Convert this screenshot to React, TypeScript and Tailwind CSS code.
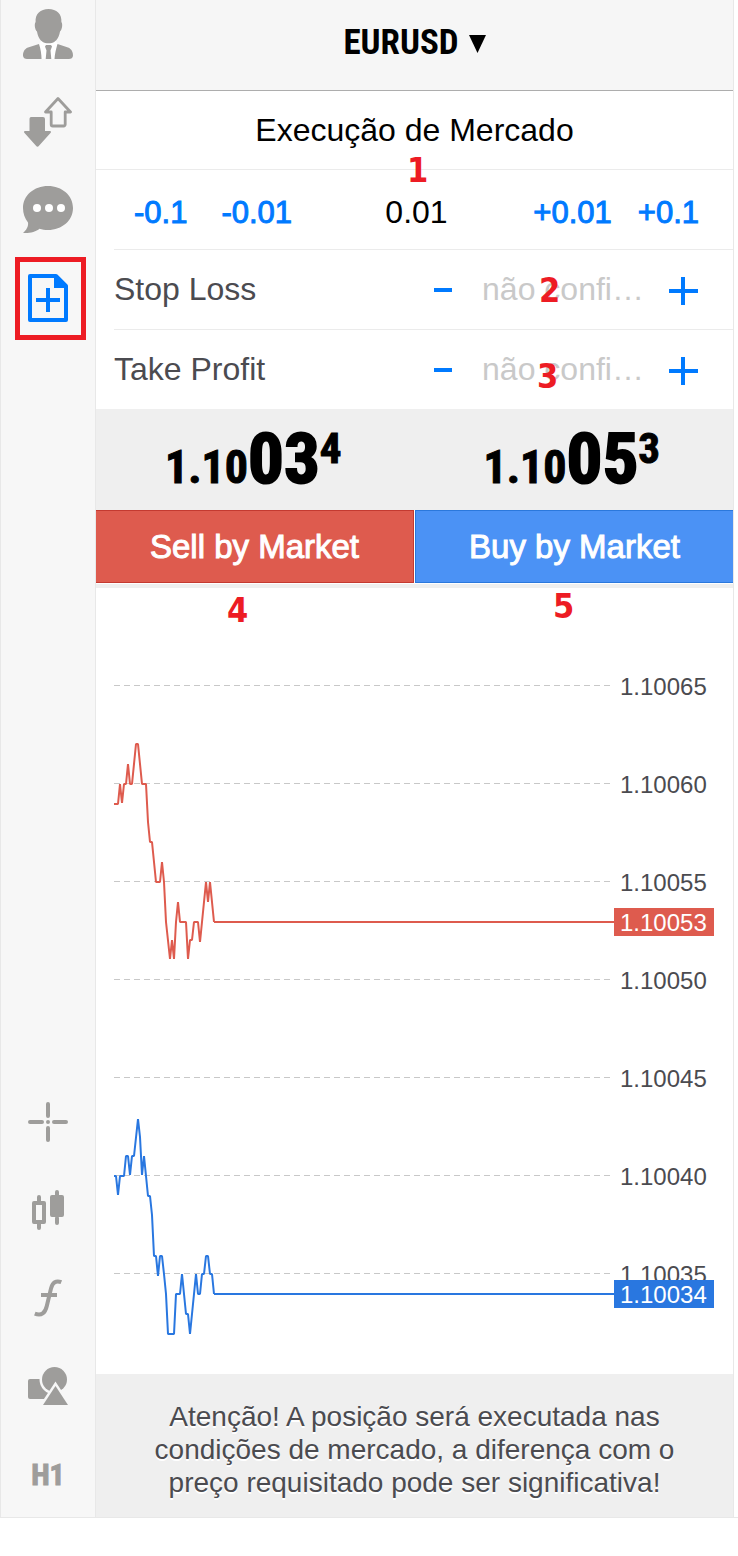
import type { ReactNode } from 'react';

const gridPrices = ['1.10065', '1.10060', '1.10055', '1.10050', '1.10045', '1.10040', '1.10035'];

const askPoints =
  '0,168 4,168 6,148 8,167 10,148 12,148 14,128 16,148 18,148 22,108 24,108 28,148 32,148 34,186 36,206 38,206 42,246 46,246 48,226 50,246 52,286 56,323 58,304 60,323 62,286 64,266 66,286 72,286 74,323 76,304 78,304 80,286 84,286 86,306 88,286 92,246 94,266 96,246 100,286';

const bidPoints =
  '0,540 2,540 4,559 6,540 10,540 12,520 14,520 16,539 18,520 20,520 24,483 26,501 28,539 30,520 32,540 34,560 36,560 38,579 40,620 42,620 44,640 46,620 48,620 50,638 52,658 54,698 60,698 62,658 66,658 68,638 70,658 72,678 74,678 76,698 80,658 82,638 84,658 86,658 88,638 90,638 92,620 94,620 96,638 98,638 100,658';

function UserIcon() {
  return (
    <svg width="50" height="50" viewBox="0 0 50 50" fill="currentColor" aria-hidden="true">
      <path fill="#fff" d="M18 32 16 36l3 14h13l3-14-2-4z" />
      <path d="M25.5 0C33.5 0 39 5 38.4 13c1.600 2 .6 8-1.400 9.500C36 28 34 31 31.500 32.700c-3 2-9 2-12 0C17 31 15 28 14 22.500c-2-1.500-3-7.500-1.400-9.500C12 5 17.500 0 25.500 0z" />
      <path d="M16 35 5 38.600C1.300 40 0 43.500 0 46.500 0 49 2 50 4 50h14.500c0-5-.8-10-2.500-15zM34.500 35 45 38.600c3.700 1.400 5 4.900 5 7.900 0 2.500-2 3.500-4 3.500H31.500c.3-5 1.500-10 3-15z" />
      <path d="M22 37.500 23 36h5l1 1.500-1.500 4L28.300 50h-5.600l.8-8.500z" />
    </svg>
  );
}

function TradeIcon() {
  return (
    <svg width="50" height="50" viewBox="0 0 50 50" fill="currentColor" aria-hidden="true">
      <path d="M9 20h11a2 2 0 0 1 2 2v12h5a1 1 0 0 1 .7 1.700L16 48.800a2 2 0 0 1-3 0L1.300 35.700A1 1 0 0 1 2 34h4.500V22a2 2 0 0 1 2.500-2z" />
      <path fill="none" stroke="currentColor" strokeWidth="2.800" strokeLinejoin="round" d="M35 1.500 47.500 15h-5.300v12.500a1.500 1.500 0 0 1-1.500 1.500h-11a1.500 1.500 0 0 1-1.500-1.500V15h-5.700z" />
    </svg>
  );
}

function ChatIcon() {
  return (
    <svg width="50" height="48" viewBox="0 0 50 48" fill="currentColor" aria-hidden="true">
      <path d="M25 0c14 0 25 9.500 25 22S39 44 25 44c-3 0-6-.4-8.500-1.200C13 46 6 47.500 0 47c3-2.500 5.700-6.500 5-10.500C1.800 32.500 0 27.500 0 22 0 9.500 11 0 25 0z" />
      <g fill="#fff">
        <circle cx="14" cy="22" r="4" />
        <circle cx="26" cy="22" r="4" />
        <circle cx="38" cy="22" r="4" />
      </g>
    </svg>
  );
}

function NewOrderIcon() {
  return (
    <svg width="40" height="48" viewBox="0 0 40 48" aria-hidden="true">
      <path fill="none" stroke="currentColor" strokeWidth="4" strokeLinejoin="round" d="M2 2h26l10 10v34H2z" />
      <path fill="currentColor" d="M26 2h3l10 10v2H26z" />
      <path fill="none" stroke="currentColor" strokeWidth="4" d="M20 14v24M8 26h24" />
    </svg>
  );
}

function CrosshairIcon() {
  return (
    <svg width="40" height="40" viewBox="0 0 40 40" aria-hidden="true">
      <path fill="none" stroke="currentColor" strokeWidth="4" strokeLinecap="round" d="M20 2v12M20 26v12M2 20h12M26 20h12M20 20h0" />
    </svg>
  );
}

function CandlesIcon() {
  return (
    <svg width="32" height="40" viewBox="0 0 32 40" fill="none" stroke="currentColor" strokeWidth="4" strokeLinecap="round" strokeLinejoin="round" aria-hidden="true">
      <path d="M7 7v5M7 34v4M25 2v4M25 28v5" />
      <path d="M2 13h10v19H2z" />
      <path fill="currentColor" d="M20 7h10v18H20z" />
    </svg>
  );
}

function FunctionIcon() {
  return (
    <svg width="28" height="38" viewBox="0 0 28 38" fill="none" stroke="currentColor" strokeWidth="4" aria-hidden="true">
      <path d="M27.300 3.200C22 1 18.500 3.500 17 9.500L12.800 27C11.200 34 7.500 37.300.8 34.700" />
      <path d="M7 16h16" />
    </svg>
  );
}

function ShapesIcon() {
  return (
    <svg width="40" height="38" viewBox="0 0 40 38" fill="currentColor" aria-hidden="true">
      <rect x="0" y="12" width="22" height="20" rx="2" />
      <circle cx="26.500" cy="12.500" r="12.500" stroke="#f7f7f7" strokeWidth="5" paintOrder="stroke" />
      <path stroke="#f7f7f7" strokeWidth="5" paintOrder="stroke" d="M27.500 19 40 38H15z" />
    </svg>
  );
}

function SideButton({ label, children }: { label: string; children: ReactNode }) {
  return (
    <button type="button" aria-label={label} className="flex h-[68px] w-full items-center justify-center text-[#9e9d9b]">
      {children}
    </button>
  );
}

function Sidebar() {
  return (
    <nav className="flex w-24 shrink-0 flex-col justify-between border-x border-[#e8e8e8] bg-[#f7f7f7] pb-[9px]">
      <div className="flex flex-col gap-5">
        <SideButton label="Conta"><UserIcon /></SideButton>
        <SideButton label="Negociação"><TradeIcon /></SideButton>
        <SideButton label="Mensagens"><ChatIcon /></SideButton>
        <div className="relative">
          <button type="button" aria-label="Nova ordem" className="flex h-[68px] w-full items-center justify-center text-[#007aff]">
            <NewOrderIcon />
          </button>
          <span className="pointer-events-none absolute -top-[7px] left-[14px] h-[83px] w-[71px] border-[5px] border-[#ed1c24]" />
        </div>
      </div>
      <div className="flex flex-col gap-5">
        <SideButton label="Cursor"><CrosshairIcon /></SideButton>
        <SideButton label="Tipo de gráfico"><CandlesIcon /></SideButton>
        <SideButton label="Indicadores"><FunctionIcon /></SideButton>
        <SideButton label="Objetos"><ShapesIcon /></SideButton>
        <button type="button" className="h-[68px] w-full font-['Roboto_Condensed','Liberation_Sans',sans-serif] text-[30px] font-bold text-[#9e9d9b] [-webkit-text-stroke:1px_#9e9d9b]">
          H1
        </button>
      </div>
    </nav>
  );
}

function Marker({ className, children }: { className: string; children: ReactNode }) {
  return (
    <span className={`pointer-events-none absolute z-10 font-['DejaVu_Sans_Condensed','DejaVu_Sans',sans-serif] text-[34px] leading-[40px] font-bold text-[#ed1c24] ${className}`}>
      {children}
    </span>
  );
}

function StepButton({ children }: { children: ReactNode }) {
  return <button type="button" className="pt-[2px] text-[31px] text-[#007aff] [-webkit-text-stroke:1px_#007aff]">{children}</button>;
}

function LevelRow({ id, label }: { id: string; label: string }) {
  return (
    <div className="ml-[18px] flex h-20 items-center border-t border-[#ebebeb] pr-[30px]">
      <label htmlFor={id} className="flex-1 pb-[2px] text-[#4b4b50]">{label}</label>
      <button type="button" aria-label={`Diminuir ${label}`} className="flex h-16 w-10 items-center justify-center text-[#007aff]">
        <svg width="18" height="4" viewBox="0 0 18 4" aria-hidden="true"><path fill="currentColor" d="M0 0h18v4H0z" /></svg>
      </button>
      <input id={id} type="text" placeholder="não confi…" className="h-16 w-[200px] min-w-0 bg-transparent text-center placeholder:text-[#c9c9c9] placeholder:opacity-100" />
      <button type="button" aria-label={`Aumentar ${label}`} className="flex h-16 w-10 items-center justify-center text-[#007aff]">
        <svg width="30" height="32" viewBox="0 0 30 32" aria-hidden="true"><path fill="currentColor" d="M13 3h4v28h-4z M1 15h29v4H1z" /></svg>
      </button>
    </div>
  );
}

function Quote({ lead, big, pip }: { lead: string; big: string; pip: string }) {
  return (
    <div className="flex items-start justify-center pt-[12px] pr-1">
      <div className="flex items-baseline">
        <span className="text-[46px] [-webkit-text-stroke:1px_#000]">{lead}</span>
        <span className="text-[71px] leading-[76px] [-webkit-text-stroke:2px_#000]">{big}</span>
      </div>
      <span className="text-[43px] leading-[54px] [-webkit-text-stroke:1px_#000]">{pip}</span>
    </div>
  );
}

function TickChart() {
  return (
    <section className="relative border-t-4 border-[#efefef] pt-12 pb-[52px] text-[24px] leading-[28px]">
      {gridPrices.map((price) => (
        <div key={price} className="flex h-[98px] items-center gap-[10px] pr-[26px] pl-[18px] text-[#4b4b50]">
          <svg className="h-px flex-1" aria-hidden="true">
            <line x1="0" x2="100%" y1="0.500" y2="0.500" stroke="#c8c8c8" strokeDasharray="6 4" />
          </svg>
          <span className="w-[87px] pt-[4px]">{price}</span>
        </div>
      ))}
      <div className="pointer-events-none absolute inset-y-0 right-[119px] left-[18px] pt-12">
        <svg className="h-full w-full" fill="none" strokeWidth="2" strokeLinejoin="bevel" aria-hidden="true">
          <g stroke="#de5b4e">
            <polyline points={askPoints} />
            <line x1="100" x2="100%" y1="286" y2="286" />
          </g>
          <g stroke="#2977e0">
            <polyline points={bidPoints} />
            <line x1="100" x2="100%" y1="658" y2="658" />
          </g>
        </svg>
      </div>
      <span className="absolute top-[320px] right-[19px] h-7 w-[100px] bg-[#de5b4e] pt-px pl-[6px] text-white">1.10053</span>
      <span className="absolute top-[692px] right-[19px] h-7 w-[100px] bg-[#2977e0] pt-px pl-[6px] text-white">1.10034</span>
      <Marker className="top-[2px] left-[131px]">4</Marker>
      <Marker className="-top-[2px] left-[457px]">5</Marker>
    </section>
  );
}

export default function App() {
  return (
    <div className="min-h-screen bg-white font-['Liberation_Sans',Arial,sans-serif]">
      <div className="flex border-b border-[#e8e8e8]">
        <Sidebar />
        <main className="mr-1 min-w-0 flex-1 border-r border-[#e8e8e8] text-[32px] leading-[40px] text-black">
          <header className="flex h-[91px] items-center justify-center border-b border-[#adadad] bg-[#f6f6f6]">
            <button type="button" className="flex items-center gap-[10px] pb-[4px] font-['Roboto_Condensed','Liberation_Sans',sans-serif] text-[35px] font-bold">
              EURUSD
              <svg className="mt-[2px]" width="17" height="18" viewBox="0 0 17 18" aria-hidden="true"><path d="M0 0h17L8.500 18z" /></svg>
            </button>
          </header>

          <h1 className="flex h-[78px] items-center justify-center">Execução de Mercado</h1>

          <div className="relative flex h-20 items-center border-t border-[#ebebeb] pt-[5px] pr-[34px] pl-[38px]">
            <div className="flex flex-1 gap-[34px]">
              <StepButton>-0.1</StepButton>
              <StepButton>-0.01</StepButton>
            </div>
            <input type="text" aria-label="Volume" defaultValue="0.01" className="w-40 bg-transparent text-center" />
            <div className="flex flex-1 justify-end gap-[26px]">
              <StepButton>+0.01</StepButton>
              <StepButton>+0.1</StepButton>
            </div>
            <Marker className="-top-[20px] left-[311px]">1</Marker>
          </div>

          <div className="relative">
            <LevelRow id="stop-loss" label="Stop Loss" />
            <LevelRow id="take-profit" label="Take Profit" />
            <Marker className="top-[21px] left-[443px]">2</Marker>
            <Marker className="top-[107px] left-[441px]">3</Marker>
          </div>

          <div className="grid h-[101px] grid-cols-2 bg-[#efefef] font-['Roboto_Condensed','Liberation_Sans',sans-serif] font-bold">
            <Quote lead="1.10" big="03" pip="4" />
            <Quote lead="1.10" big="05" pip="3" />
          </div>

          <div className="mb-px grid grid-cols-2 gap-px text-[33px] text-white">
            <button type="button" className="h-[73px] border-y border-r border-[#c43a30] bg-[#de5b4e] [-webkit-text-stroke:1px_#fff]">
              Sell by Market
            </button>
            <button type="button" className="h-[73px] border-y border-l border-[#2b78dc] bg-[#4b92f5] [-webkit-text-stroke:1px_#fff]">
              Buy by Market
            </button>
          </div>

          <TickChart />

          <p className="bg-[#efefef] px-12 pt-[26px] pb-[18px] text-center text-[28px] leading-[33px] text-[#4b4b50] [text-shadow:0_2px_0_#fff]">
            Atenção! A posição será executada nas condições de mercado, a diferença com o preço requisitado pode ser significativa!
          </p>
        </main>
      </div>
    </div>
  );
}
